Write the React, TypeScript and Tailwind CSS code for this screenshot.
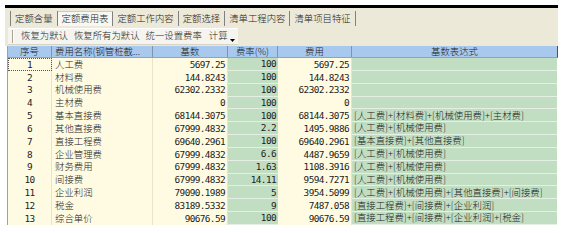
import React from 'react';

const rows: [number, string, string, string, string, string][] = [
  [1, '人工费', '5697.25', '100', '5697.25', ''],
  [2, '材料费', '144.8243', '100', '144.8243', ''],
  [3, '机械使用费', '62302.2332', '100', '62302.2332', ''],
  [4, '主材费', '0', '100', '0', ''],
  [5, '基本直接费', '68144.3075', '100', '68144.3075', '[人工费]+[材料费]+[机械使用费]+[主材费]'],
  [6, '其他直接费', '67999.4832', '2.2', '1495.9886', '[人工费]+[机械使用费]'],
  [7, '直接工程费', '69640.2961', '100', '69640.2961', '[基本直接费]+[其他直接费]'],
  [8, '企业管理费', '67999.4832', '6.6', '4487.9659', '[人工费]+[机械使用费]'],
  [9, '财务费用', '67999.4832', '1.63', '1108.3916', '[人工费]+[机械使用费]'],
  [10, '间接费', '67999.4832', '14.11', '9594.7271', '[人工费]+[机械使用费]'],
  [11, '企业利润', '79090.1989', '5', '3954.5099', '[人工费]+[机械使用费]+[其他直接费]+[间接费]'],
  [12, '税金', '83189.5332', '9', '7487.058', '[直接工程费]+[间接费]+[企业利润]'],
  [13, '综合单价', '90676.59', '100', '90676.59', '[直接工程费]+[间接费]+[企业利润]+[税金]'],
];

const tabs = ['定额含量', '定额费用表', '定额工作内容', '定额选择', '清单工程内容', '清单项目特征'];

const cjk = { fontFamily: '"Noto Sans CJK SC", "Noto Sans", sans-serif' };
const mono = { fontFamily: '"DejaVu Sans Mono", "Noto Sans CJK SC", monospace' };

export default function App() {
  return (
    <div className="w-[578px] h-[233px] bg-white overflow-hidden text-[#1c1c1c] font-light" style={cjk}>
      <div className="w-[558px] pl-[5px] pt-[5px]">
        <div className="h-[3px] bg-black" />
        <div className="bg-[#ece9d8]">
          {/* tabs */}
          <div className="h-[19px] flex items-end pl-[5px]">
            <div className="flex h-[15px] mb-[1px] border-l border-[#808080]">
              {tabs.map((t, i) => (
                <div
                  key={t}
                  className={
                    'flex items-center px-[4px] text-[9.4px] leading-none border-r border-[#808080] ' +
                    (i === 1 ? 'bg-[#f8f7f2] border-t border-t-[#f2c48a]' : 'bg-[#ece9d8]')
                  }
                >
                  {t}
                </div>
              ))}
            </div>
          </div>
          {/* toolbar */}
          <div className="h-[19px] flex items-center pb-[1px]">
            <div className="h-[17px] w-[230px] ml-[3px] flex items-center bg-[#f5f4ee] border-t border-white border-b border-b-[#d8d4c4] relative">
              <div className="w-[2px] h-[13px] border-l border-[#a8a490] border-r border-r-white ml-[4px] mr-[7px]" />
              <span className="text-[9.4px] leading-none mr-[6px]">恢复为默认</span>
              <span className="text-[9.4px] leading-none mr-[6px]">恢复所有为默认</span>
              <span className="text-[9.4px] leading-none mr-[7px]">统一设置费率</span>
              <span className="text-[9.4px] leading-none">计算</span>
              <svg className="absolute left-[222px] top-[10px]" width="5" height="3" viewBox="0 0 5 3">
                <path d="M0 0 H5 L2.5 3 Z" fill="#000" />
              </svg>
            </div>
          </div>
        </div>
        {/* grid */}
        <div className="ml-[2px] border-l border-[#a0a0a0]">
          <div className="flex h-[12px] bg-[#a8c8ee] border-b border-[#8aa4c8] border-r border-r-[#505050] text-[9.4px] leading-none">
            <div className="w-[44px] flex items-center justify-center border-r border-[#7f93b0]">序号</div>
            <div className="w-[101px] flex items-center pl-[3px] border-r border-[#7f93b0] whitespace-nowrap">费用名称(钢管桩截...</div>
            <div className="w-[75px] flex items-center justify-center border-r border-[#7f93b0]">基数</div>
            <div className="w-[50px] flex items-center justify-center border-r border-[#7f93b0]">费率(%)</div>
            <div className="w-[74px] flex items-center justify-center border-r border-[#7f93b0]">费用</div>
            <div className="flex-1 flex items-center justify-center">基数表达式</div>
          </div>
          {rows.map(([n, name, base, rate, fee, expr]) => (
            <div key={n} className="flex h-[12.85px] text-[9.4px] leading-none">
              <div
                className={
                  'w-[44px] flex items-center justify-center bg-[#fffbe2] border-r border-[#e8e4c8] ' +
                  (n === 1 ? 'outline outline-1 outline-dotted outline-[#555] -outline-offset-1' : '')
                }
                style={mono}
              >
                <span className="tracking-[-0.6px]">{n}</span>
              </div>
              <div className="w-[101px] flex items-center pl-[3px] bg-[#fffbe2] border-r border-[#e8e4c8] whitespace-nowrap">
                {name}
              </div>
              <div className="w-[75px] flex items-center justify-end pr-[2px] bg-[#fffbe2] border-r border-[#e8e4c8]" style={mono}>
                <span className="tracking-[-0.6px]">{base}</span>
              </div>
              <div className="w-[50px] flex items-center justify-end pr-[2px] bg-[#c2dec2] border-b border-[#e4f0e4]" style={mono}>
                <span className="tracking-[-0.6px]">{rate}</span>
              </div>
              <div className="w-[74px] flex items-center justify-end pr-[2px] bg-[#fffbe2] border-r border-[#e8e4c8]" style={mono}>
                <span className="tracking-[-0.6px]">{fee}</span>
              </div>
              <div className="w-[205px] flex items-center pl-[2px] bg-[#c2dec2] border-b border-[#e4f0e4] whitespace-nowrap">
                {expr}
              </div>
            </div>
          ))}
        </div>
      </div>
    </div>
  );
}
